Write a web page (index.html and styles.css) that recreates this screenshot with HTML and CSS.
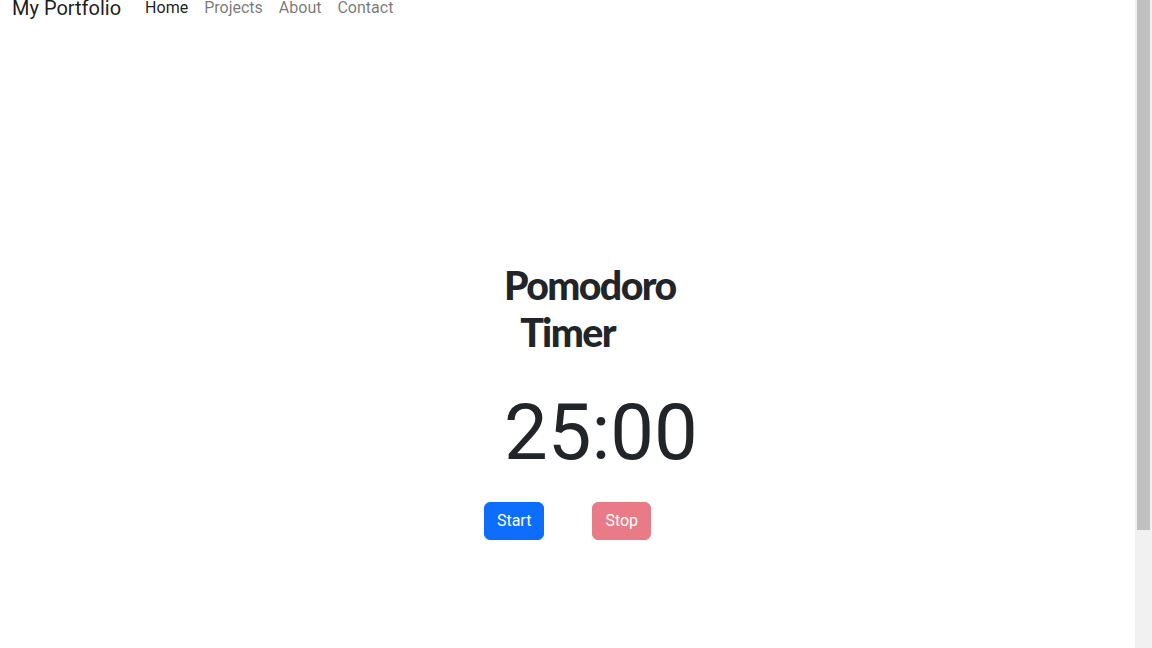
FILE: index.html
```html
<!DOCTYPE html>
<html lang="en">
<head>
<meta charset="utf-8">
<title>Pomodoro Timer</title>
<link rel="stylesheet" href="styles.css">
</head>
<body>
<nav class="navbar">
  <a class="brand" href="#">My Portfolio</a>
  <ul class="nav-links">
    <li><a class="nav-link active" href="#">Home</a></li>
    <li><a class="nav-link" href="#">Projects</a></li>
    <li><a class="nav-link" href="#">About</a></li>
    <li><a class="nav-link" href="#">Contact</a></li>
  </ul>
</nav>
<main class="page">
  <section class="timer-col">
    <h1 class="title">Pomodoro Timer</h1>
    <div class="time">25:00</div>
    <div class="controls">
      <button class="btn btn-primary" type="button">Start</button>
      <button class="btn btn-danger" type="button" disabled>Stop</button>
    </div>
  </section>
</main>
<div class="scrollbar" aria-hidden="true"><div class="scrollbar-thumb"></div></div>
</body>
</html>
```
FILE: styles.css
```css
html, body {
  margin: 0;
  padding: 0;
}
body {
  font-family: Roboto, "Liberation Sans", sans-serif;
  font-size: 16px;
  line-height: 1.5;
  color: #212529;
  background: #fff;
  padding-right: 17px;
  overflow: hidden;
  height: 648px;
  box-sizing: border-box;
}
.navbar {
  display: flex;
  align-items: center;
  height: 30px;
  margin-top: -7px;
  padding: 0 12px;
}
.brand {
  font-size: 20px;
  line-height: 30px;
  color: rgba(0, 0, 0, 0.9);
  text-decoration: none;
  margin-right: 16px;
}
.nav-links {
  display: flex;
  list-style: none;
  margin: 0;
  padding: 0;
}
.nav-link {
  display: block;
  padding: 0 8px;
  line-height: 24px;
  color: rgba(0, 0, 0, 0.55);
  text-decoration: none;
}
.nav-link.active {
  color: rgba(0, 0, 0, 0.9);
}
.page {
  padding-top: 238px;
}
.timer-col {
  width: 127px;
  margin: 0 auto;
  text-align: center;
}
.title {
  margin: 0 0 31px;
  font-family: Lato, "Open Sans", sans-serif;
  font-weight: 900;
  font-size: 39.28px;
  line-height: 1.2;
  letter-spacing: -1.6px;
  color: #212529;
}
.time {
  font-size: 77.84px;
  font-weight: 400;
  line-height: 1.2;
  margin-bottom: 22px;
}
.controls {
  display: flex;
  justify-content: center;
  gap: 48px;
}
.btn {
  font-family: Roboto, "Liberation Sans", sans-serif;
  font-size: 16px;
  line-height: 24px;
  padding: 6px 12px;
  border: 1px solid transparent;
  border-radius: 6px;
  color: #fff;
  white-space: nowrap;
}
.btn-primary {
  background: #0d6efd;
  border-color: #0d6efd;
}
.btn-danger {
  background: #dc3545;
  border-color: #dc3545;
}
.btn:disabled {
  opacity: 0.65;
}
.scrollbar {
  position: fixed;
  top: 0;
  right: 0;
  width: 17px;
  height: 648px;
  background: #f1f1f1;
}
.scrollbar-thumb {
  margin: 0 2px;
  height: 530px;
  background: #c1c1c1;
}
```
